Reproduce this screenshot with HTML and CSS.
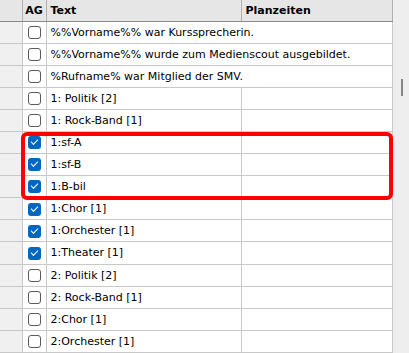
FILE: index.html
```html
<!DOCTYPE html>
<html lang="de">
<head>
    <meta charset="UTF-8">
    <title>AG Texte</title>
    <link rel="stylesheet" href="styles.css">
</head>
<body>

    <div class="grid-wrap">
        <table class="grid">
            <thead>
                <tr>
                    <th class="rowhead"></th>
                    <th class="col-ag">AG</th>
                    <th class="col-text">Text</th>
                    <th class="col-plan">Planzeiten</th>
                </tr>
            </thead>
            <tbody>
                <!-- lange Texte laufen in die Planzeiten-Spalte hinein -->
                <tr><td class="rowhead"></td><td class="col-ag"><span class="cb"></span></td><td colspan="2">%%Vorname%% war Kurssprecherin.</td></tr>
                <tr><td class="rowhead"></td><td class="col-ag"><span class="cb"></span></td><td colspan="2">%%Vorname%% wurde zum Medienscout ausgebildet.</td></tr>
                <tr><td class="rowhead"></td><td class="col-ag"><span class="cb"></span></td><td colspan="2">%Rufname% war Mitglied der SMV.</td></tr>
                <tr><td class="rowhead"></td><td class="col-ag"><span class="cb"></span></td><td>1: Politik [2]</td><td></td></tr>
                <tr><td class="rowhead"></td><td class="col-ag"><span class="cb"></span></td><td>1: Rock-Band [1]</td><td></td></tr>
                <tr><td class="rowhead"></td><td class="col-ag"><span class="cb on"></span></td><td>1:sf-A</td><td></td></tr>
                <tr><td class="rowhead"></td><td class="col-ag"><span class="cb on"></span></td><td>1:sf-B</td><td></td></tr>
                <tr><td class="rowhead"></td><td class="col-ag"><span class="cb on"></span></td><td>1:B-bil</td><td></td></tr>
                <tr><td class="rowhead"></td><td class="col-ag"><span class="cb on"></span></td><td>1:Chor [1]</td><td></td></tr>
                <tr><td class="rowhead"></td><td class="col-ag"><span class="cb on"></span></td><td>1:Orchester [1]</td><td></td></tr>
                <tr><td class="rowhead"></td><td class="col-ag"><span class="cb on"></span></td><td>1:Theater [1]</td><td></td></tr>
                <tr><td class="rowhead"></td><td class="col-ag"><span class="cb"></span></td><td>2: Politik [2]</td><td></td></tr>
                <tr><td class="rowhead"></td><td class="col-ag"><span class="cb"></span></td><td>2: Rock-Band [1]</td><td></td></tr>
                <tr><td class="rowhead"></td><td class="col-ag"><span class="cb"></span></td><td>2:Chor [1]</td><td></td></tr>
                <tr><td class="rowhead"></td><td class="col-ag"><span class="cb"></span></td><td>2:Orchester [1]</td><td></td></tr>
            </tbody>
        </table>

        <div class="scrollbar">
            <div class="thumb"></div>
        </div>

        <!-- Markierung um die sf/B-bil Zeilen -->
        <div class="marker"></div>
    </div>

</body>
</html>
```

FILE: styles.css
```css
/* General */
body {
    margin: 0;
    background: #fff;
    font-family: 'DejaVu Sans', Verdana, sans-serif;
    font-size: 11px;
    color: #000;
}

.grid-wrap {
    position: relative;
    display: flex;
    width: 409px;
    height: 353px;
    overflow: hidden;
}

/* Table */
.grid {
    border-collapse: collapse;
    table-layout: fixed;
    width: 392px;
    flex: none;
}

.grid th,
.grid td {
    height: 21px;
    padding: 0 0 0 4px;
    border-right: 1px solid #c8c8c8;
    border-bottom: 1px solid #c8c8c8;
    white-space: nowrap;
    overflow: hidden;
    text-align: left;
    box-sizing: border-box;
}

.grid td {
    height: 22px;
}

.grid th {
    background: #e6e6e6;
    font-weight: bold;
    border-bottom-color: #8a8a8a;
    border-right-color: #b0b0b0;
}

.grid .rowhead {
    width: 22px;
    padding: 0;
    background: #f0f0f0;
}

.grid th.rowhead {
    background: #e6e6e6;
}

.grid .col-ag {
    width: 24px;
    padding: 0;
    text-align: center;
}

.grid .col-text {
    width: 195px;
}

.grid .col-plan {
    width: 151px;
}

/* Checkboxes */
.cb {
    display: inline-block;
    width: 11px;
    height: 11px;
    border: 1px solid #5a5a5a;
    border-radius: 3px;
    vertical-align: middle;
    background: #fff;
}

.cb.on {
    width: 13px;
    height: 13px;
    border: none;
    background: #0067c0;
    position: relative;
}

.cb.on::after {
    content: "";
    position: absolute;
    left: 3px;
    top: 3px;
    width: 6px;
    height: 3px;
    border-left: 1px solid #fff;
    border-bottom: 1px solid #fff;
    transform: rotate(-45deg);
}

/* Scrollbar */
.scrollbar {
    flex: 1;
    background: #eeeeee;
    position: relative;
}

.thumb {
    position: absolute;
    left: 8px;
    top: 79px;
    width: 2px;
    height: 17px;
    background: #858585;
}

/* Red marker */
.marker {
    position: absolute;
    left: 21px;
    top: 132px;
    width: 364px;
    height: 60px;
    border: 4px solid #ff0000;
    border-radius: 6px;
}
```
